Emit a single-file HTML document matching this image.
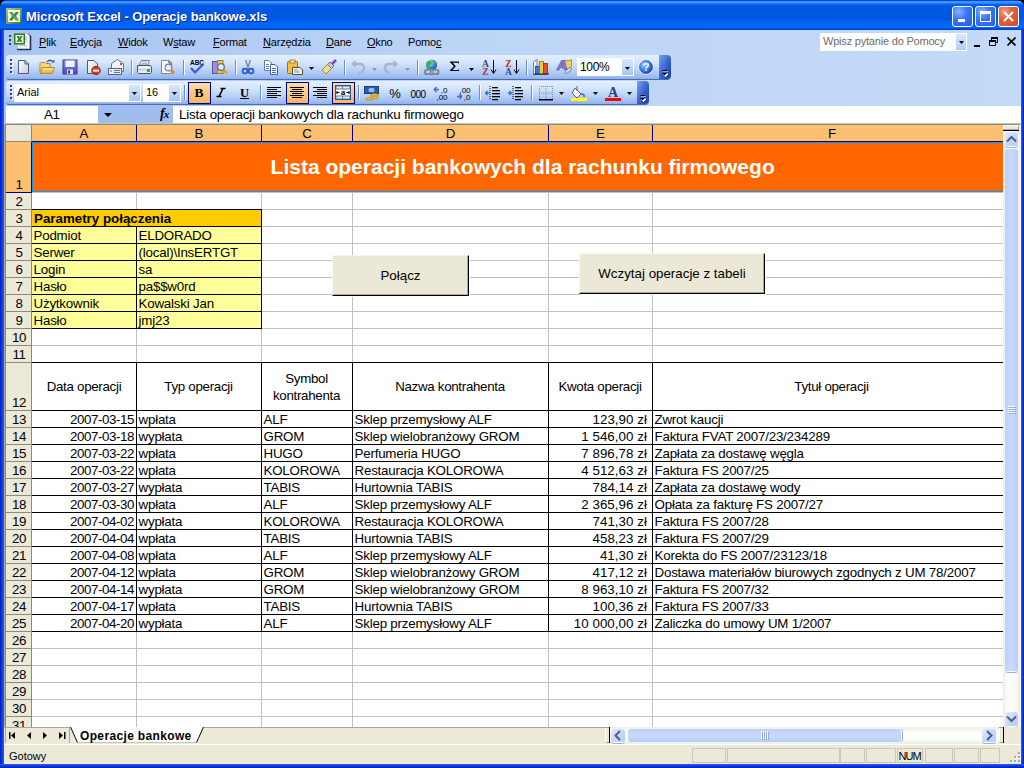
<!DOCTYPE html>
<html><head><meta charset="utf-8"><title>Excel</title><style>
*{margin:0;padding:0;box-sizing:border-box}
html,body{width:1024px;height:768px;overflow:hidden;background:#000}
body{position:relative;font-family:"Liberation Sans",sans-serif;}
div{position:absolute}
.t{white-space:nowrap;line-height:1}
</style></head>
<body>
<div style="left:0px;top:0px;width:1024px;height:30px;background:linear-gradient(to bottom,#0843d0 0px,#0843d0 1px,#3c94ff 1px,#3c94ff 3px,#0a68f2 4px,#0058e2 6px,#0058e2 19px,#0064f6 22px,#0068fc 28px,#0040c8 29px,#0040c8 30px);border-radius:7px 7px 0 0"></div><div style="left:0px;top:30px;width:4px;height:738px;background:linear-gradient(to right,#0018c8,#0a3ee0 50%,#1e64f2)"></div><div style="left:1021px;top:30px;width:3px;height:738px;background:linear-gradient(to left,#0018a8,#0a3ee0 50%,#1e64f2)"></div><div style="left:0px;top:764px;width:1024px;height:4px;background:linear-gradient(to top,#0018a8,#0a3ee0 50%,#1e64f2)"></div><svg style="position:absolute;left:6px;top:8px" width="16" height="16" viewBox="0 0 16 16">
<defs><linearGradient id="gxl" x1="0" y1="0" x2="1" y2="1"><stop offset="0" stop-color="#b4cc80"/><stop offset="1" stop-color="#4a6a1e"/></linearGradient></defs>
<rect x="0" y="0" width="16" height="16" fill="url(#gxl)"/>
<rect x="2" y="2" width="12" height="12" fill="#f4f8f0"/>
<path d="M3 4H6.2L8 6.3L9.8 4H13L10 8L13 12.5H9.8L8 10L6.2 12.5H3L6 8Z" fill="#2e9030"/>
<path d="M4 4.5L11.5 12" stroke="#9ad890" stroke-width="0.8"/>
</svg><div class="t" style="left:26px;top:10px;font-size:13px;font-weight:bold;color:#fff;text-shadow:1px 1px 0 #0a1e8c;letter-spacing:-0.08px">Microsoft Excel - Operacje bankowe.xls</div><div style="left:952px;top:6px;width:21px;height:21px;background:radial-gradient(circle at 30% 25%,#8cb0ff 0%,#3a78f8 40%,#2458e8 100%);border:1px solid #fff;border-radius:3px"><div style="left:5px;top:12px;width:7px;height:3px;background:#fff"></div></div><div style="left:975px;top:6px;width:21px;height:21px;background:radial-gradient(circle at 30% 25%,#8cb0ff 0%,#3a78f8 40%,#2458e8 100%);border:1px solid #fff;border-radius:3px"><div style="left:4px;top:4px;width:11px;height:11px;border:1px solid #fff;border-top-width:3px"></div></div><div style="left:998px;top:6px;width:21px;height:21px;background:radial-gradient(circle at 30% 25%,#f0a080 0%,#e06040 40%,#d04a20 100%);border:1px solid #fff;border-radius:3px"><svg style="position:absolute;left:3px;top:3px" width="13" height="13" viewBox="0 0 13 13"><path d="M2 2 L11 11 M11 2 L2 11" stroke="#fff" stroke-width="2"/></svg></div><div style="left:4px;top:30px;width:1017px;height:25px;background:linear-gradient(to right,#a8c4f2 0%,#bcd4f6 45%,#c4daf8 100%)"></div><div style="left:9px;top:35px;width:2px;height:2px;background:#27418a"></div><div style="left:9px;top:39px;width:2px;height:2px;background:#27418a"></div><div style="left:9px;top:43px;width:2px;height:2px;background:#27418a"></div><svg style="position:absolute;left:14px;top:33px" width="18" height="18" viewBox="0 0 18 18">
<path d="M3.5 0.5H14L16.5 3V16.5H3.5Z" fill="#f2f6fd" stroke="#b8c8e0"/>
<path d="M16.5 3V17M3 16.5H17" stroke="#27344e" stroke-width="1.6"/>
<path d="M14 0.5L16.5 3" stroke="#27344e"/>
<path d="M10 4.5H13M10 6.5H13M10 8.5H13M5 12.5H9M10 11V13H13" fill="none" stroke="#a8c0e0"/>
<rect x="0.75" y="1.25" width="9.5" height="9.5" fill="#fafcf6" stroke="#2a7a1a" stroke-width="1.5"/>
<path d="M2.5 3L4.8 3L5.5 4.5L6.2 3L8.5 3L6.8 6L8.5 9L6.2 9L5.5 7.5L4.8 9L2.5 9L4.2 6Z" fill="#2a8a2a"/>
</svg><div class="t" style="left:39px;top:37px;font-size:11px;color:#000;letter-spacing:-0.2px"><u>P</u>lik</div><div class="t" style="left:70px;top:37px;font-size:11px;color:#000;letter-spacing:-0.2px"><u>E</u>dycja</div><div class="t" style="left:118px;top:37px;font-size:11px;color:#000;letter-spacing:-0.2px"><u>W</u>idok</div><div class="t" style="left:163px;top:37px;font-size:11px;color:#000;letter-spacing:-0.2px">W<u>s</u>taw</div><div class="t" style="left:213px;top:37px;font-size:11px;color:#000;letter-spacing:-0.2px"><u>F</u>ormat</div><div class="t" style="left:263px;top:37px;font-size:11px;color:#000;letter-spacing:-0.2px"><u>N</u>arzędzia</div><div class="t" style="left:326px;top:37px;font-size:11px;color:#000;letter-spacing:-0.2px"><u>D</u>ane</div><div class="t" style="left:367px;top:37px;font-size:11px;color:#000;letter-spacing:-0.2px"><u>O</u>kno</div><div class="t" style="left:408px;top:37px;font-size:11px;color:#000;letter-spacing:-0.2px">Pomo<u>c</u></div><div style="left:820px;top:33px;width:147px;height:18px;background:#fff"></div><div class="t" style="left:823px;top:36px;font-size:11px;color:#6d6d6d;letter-spacing:-0.2px">Wpisz pytanie do Pomocy</div><div style="left:956px;top:34px;width:10px;height:16px;background:linear-gradient(to bottom,#d6e6fd,#b4ccf4)"></div><svg style="position:absolute;left:959px;top:41px" width="5" height="3"><path d="M0 0H5L2.5 3Z" fill="#000"/></svg><div style="left:974px;top:45px;width:6px;height:2px;background:#000"></div><svg style="position:absolute;left:989px;top:37px" width="9" height="9" viewBox="0 0 9 9"><path d="M2.5 0.5 H8.5 V5.5 H6.5 M0.5 3.5 H6.5 V8.5 H0.5 Z M2.5 0.5 V3.5" fill="none" stroke="#000"/><rect x="2" y="0" width="7" height="2" fill="#000"/><rect x="0" y="3" width="7" height="2" fill="#000"/></svg><svg style="position:absolute;left:1007px;top:37px" width="9" height="9" viewBox="0 0 9 9"><path d="M0.5 0.5 L8.5 8.5 M8.5 0.5 L0.5 8.5" stroke="#000" stroke-width="1.6"/></svg><div style="left:4px;top:55px;width:1017px;height:50px;background:linear-gradient(to right,#a8c4f2 0%,#bcd4f6 45%,#c4daf8 100%)"></div><div style="left:6px;top:55px;width:665px;height:24px;background:linear-gradient(to bottom,#e4effe 0%,#d6e6fc 30%,#bcd4f8 60%,#9fbdf0 90%,#8cafec 100%);border-radius:3px 4px 4px 3px;box-shadow:0 1px 0 #4a6cb0"></div><div style="left:659px;top:55px;width:12px;height:24px;background:linear-gradient(to bottom right,#7ca4ee,#3a66d0 50%,#1a3a9c);border-radius:0 4px 4px 0"></div><svg style="position:absolute;left:662px;top:70px" width="8" height="8"><path d="M1 1H6M1 4H6L3.5 6.5Z" fill="#fff" stroke="#fff" stroke-width="1"/><path d="M0.5 0.5H5.5" stroke="#000"/><path d="M0 3H5L2.5 5.5Z" fill="#000"/></svg><div style="left:10px;top:59px;width:2px;height:2px;background:#27418a;box-shadow:1px 1px 0 #fff"></div><div style="left:10px;top:63px;width:2px;height:2px;background:#27418a;box-shadow:1px 1px 0 #fff"></div><div style="left:10px;top:67px;width:2px;height:2px;background:#27418a;box-shadow:1px 1px 0 #fff"></div><div style="left:10px;top:71px;width:2px;height:2px;background:#27418a;box-shadow:1px 1px 0 #fff"></div><div style="left:6px;top:81px;width:643px;height:23px;background:linear-gradient(to bottom,#e4effe 0%,#d6e6fc 30%,#bcd4f8 60%,#9fbdf0 90%,#8cafec 100%);border-radius:3px 4px 4px 3px;box-shadow:0 1px 0 #4a6cb0"></div><div style="left:637px;top:81px;width:12px;height:23px;background:linear-gradient(to bottom right,#7ca4ee,#3a66d0 50%,#1a3a9c);border-radius:0 4px 4px 0"></div><svg style="position:absolute;left:640px;top:95px" width="8" height="8"><path d="M1 1H6M1 4H6L3.5 6.5Z" fill="#fff" stroke="#fff" stroke-width="1"/><path d="M0.5 0.5H5.5" stroke="#000"/><path d="M0 3H5L2.5 5.5Z" fill="#000"/></svg><div style="left:10px;top:85px;width:2px;height:2px;background:#27418a;box-shadow:1px 1px 0 #fff"></div><div style="left:10px;top:89px;width:2px;height:2px;background:#27418a;box-shadow:1px 1px 0 #fff"></div><div style="left:10px;top:93px;width:2px;height:2px;background:#27418a;box-shadow:1px 1px 0 #fff"></div><div style="left:10px;top:97px;width:2px;height:2px;background:#27418a;box-shadow:1px 1px 0 #fff"></div><svg width="0" height="0" style="position:absolute"><defs>
<linearGradient id="gpage" x1="0" y1="0" x2="1" y2="1"><stop offset="0" stop-color="#fff"/><stop offset="1" stop-color="#c8cee0"/></linearGradient>
<linearGradient id="gfold" x1="0" y1="0" x2="0" y2="1"><stop offset="0" stop-color="#ffe9a0"/><stop offset="1" stop-color="#e8a820"/></linearGradient>
<linearGradient id="gblue" x1="0" y1="0" x2="0" y2="1"><stop offset="0" stop-color="#8a90f0"/><stop offset="1" stop-color="#4848b8"/></linearGradient>
<linearGradient id="ghl" x1="0" y1="0" x2="0" y2="1"><stop offset="0" stop-color="#ffdca8"/><stop offset="1" stop-color="#f8b458"/></linearGradient>
<radialGradient id="gglobe" cx="0.35" cy="0.3" r="0.7"><stop offset="0" stop-color="#b8e0ff"/><stop offset="0.6" stop-color="#3c8ee0"/><stop offset="1" stop-color="#1a5aa8"/></radialGradient>
<radialGradient id="ghelp" cx="0.35" cy="0.3" r="0.7"><stop offset="0" stop-color="#9ed0ff"/><stop offset="0.7" stop-color="#2a70e0"/><stop offset="1" stop-color="#1848b0"/></radialGradient>
</defs></svg><svg style="position:absolute;left:15px;top:59px" width="16" height="16" viewBox="0 0 16 16"><path d="M3.5 1.5H10L13.5 5V14.5H3.5Z" fill="url(#gpage)" stroke="#4a5a78"/><path d="M10 1.5V5H13.5" fill="none" stroke="#4a5a78"/></svg><svg style="position:absolute;left:39px;top:59px" width="16" height="16" viewBox="0 0 16 16"><path d="M1 13.5V4.5L2 3.5H6L7 4.5H11V13.5Z" fill="#f8d878" stroke="#b08a30"/><path d="M1 14.5L3.5 8.5H15.5L13 14.5Z" fill="url(#gfold)" stroke="#b08a30"/><path d="M8 3Q11 -0.5 14 3" fill="none" stroke="#3a5aa0" stroke-width="1.5"/><path d="M12.5 3.5H15.5V0.5Z" fill="#3a5aa0"/></svg><svg style="position:absolute;left:62px;top:59px" width="16" height="16" viewBox="0 0 16 16"><rect x="1" y="1" width="14" height="14" fill="url(#gblue)" stroke="#3a3aa0"/><rect x="3.5" y="1.5" width="9" height="6.5" fill="#f4f6ff"/><rect x="5" y="10.5" width="6" height="4.5" fill="#e8e8f0"/><rect x="6" y="11.5" width="2" height="3" fill="#303060"/></svg><svg style="position:absolute;left:86px;top:59px" width="16" height="16" viewBox="0 0 16 16"><path d="M1.5 1.5H8L11.5 5V14.5H1.5Z" fill="url(#gpage)" stroke="#4a5a78"/><circle cx="10" cy="11.5" r="4.2" fill="#d03a1a" stroke="#a02010"/><rect x="7" y="10.6" width="6" height="2" fill="#fff"/></svg><svg style="position:absolute;left:108px;top:59px" width="16" height="16" viewBox="0 0 16 16"><path d="M3.5 4.5L9.5 0.5L15.5 4.5V12.5H3.5Z" fill="#f0f2f8" stroke="#68708a"/><rect x="12" y="4" width="2" height="2" fill="#e03a2a"/><rect x="0.5" y="9.5" width="13" height="6" fill="#e8ecf4" stroke="#5a6480"/><path d="M2 12H4M6 11.5H12M6 13.5H12" stroke="#5a78b0"/></svg><div style="left:131px;top:60px;width:1px;height:15px;background:#6a8cd0;box-shadow:1px 0 0 #fff"></div><svg style="position:absolute;left:136px;top:59px" width="16" height="16" viewBox="0 0 16 16"><path d="M5.5 1.5H13.5L11.5 6H3.5Z" fill="#f8f9fc" stroke="#6a7088" stroke-width="0.9"/><path d="M6.5 3H11M6 4.5H10.5" stroke="#8890a8" stroke-width="0.7"/><path d="M1.5 6.5H14.5L15.5 8V13.5L14.5 14.5H2.5L1.5 13.5Z" fill="#e8ecf4" stroke="#4a5470" stroke-width="1"/><path d="M2 8.5H14.5" stroke="#fff" stroke-width="1"/><path d="M2 10.5H11" stroke="#c8ccd8" stroke-width="1.5"/><rect x="11" y="10" width="3" height="3" fill="#18c018"/></svg><svg style="position:absolute;left:160px;top:59px" width="16" height="16" viewBox="0 0 16 16"><path d="M1.5 1.5H9L11.5 4V14.5H1.5Z" fill="#fcfcfe" stroke="#7a84a0"/><path d="M9 1.5V4H11.5" fill="none" stroke="#3a4460"/><circle cx="8.5" cy="8.5" r="3.4" fill="#e4ecf8" stroke="#707890" stroke-width="1.1"/><path d="M11 11L14 14" stroke="#e08a20" stroke-width="2.6"/></svg><div style="left:183px;top:60px;width:1px;height:15px;background:#6a8cd0;box-shadow:1px 0 0 #fff"></div><svg style="position:absolute;left:189px;top:59px" width="16" height="16" viewBox="0 0 16 16"><text x="8" y="6" font-family="Liberation Sans" font-size="6.5" font-weight="bold" text-anchor="middle" fill="#000">ABC</text><path d="M2 9L6 13.5L14.5 5" fill="none" stroke="#3a5ad8" stroke-width="2.2"/></svg><svg style="position:absolute;left:212px;top:59px" width="16" height="16" viewBox="0 0 16 16"><rect x="0.5" y="2.5" width="5" height="12" fill="#a090e0" stroke="#6050a8"/><rect x="5.5" y="1.5" width="5.5" height="13" fill="#f0c840" stroke="#a08020"/><circle cx="9" cy="8" r="3.3" fill="#e0ecf8" stroke="#5a6a88" stroke-width="1.2"/><path d="M11.5 10.5L15 14.5" stroke="#e0a030" stroke-width="2.5"/></svg><div style="left:235px;top:60px;width:1px;height:15px;background:#6a8cd0;box-shadow:1px 0 0 #fff"></div><svg style="position:absolute;left:240px;top:59px" width="16" height="16" viewBox="0 0 16 16"><path d="M5.5 1L8.5 9.5M10.5 1L7.5 9.5" stroke="#8890a0" stroke-width="1.6"/><circle cx="5" cy="12" r="2.4" fill="none" stroke="#2a5ad0" stroke-width="1.8"/><circle cx="11" cy="12" r="2.4" fill="none" stroke="#2a5ad0" stroke-width="1.8"/></svg><svg style="position:absolute;left:263px;top:59px" width="16" height="16" viewBox="0 0 16 16"><path d="M1.5 1.5H6L8.5 4V11.5H1.5Z" fill="#fafcff" stroke="#6a7a98"/><path d="M3 5.5H6M3 7.5H6M3 9.5H6" stroke="#5a8ad8"/><path d="M7.5 5.5H12L14.5 8V15.5H7.5Z" fill="#fafcff" stroke="#3a62b0"/><path d="M9 9.5H13M9 11.5H13M9 13.5H13" stroke="#3a6ac8"/></svg><svg style="position:absolute;left:287px;top:59px" width="16" height="16" viewBox="0 0 16 16"><rect x="0.5" y="2.5" width="10" height="12" rx="1" fill="#f4c040" stroke="#9a7020"/><rect x="3" y="1" width="5" height="3" fill="#f8e8b0" stroke="#9a7020" stroke-width="0.8"/><path d="M5.5 8.5H13L15.5 11V15.5H5.5Z" fill="#f0f2f8" stroke="#5a4a38"/><path d="M7 11H11M7 13H13" stroke="#8890a8"/></svg><svg style="position:absolute;left:309px;top:67px" width="5" height="3" viewBox="0 0 5 3"><path d="M0 0H5L2.5 3Z" fill="#000"/></svg><svg style="position:absolute;left:321px;top:59px" width="16" height="16" viewBox="0 0 16 16"><path d="M1 11L6.5 5.5L10.5 9.5L5 15Z" fill="#f0e08a" stroke="#a08838"/><path d="M6.5 5.5L9 3L13 7L10.5 9.5Z" fill="#c8c8d0" stroke="#707080"/><path d="M11 5L15 1" stroke="#6a50c8" stroke-width="2.5"/></svg><div style="left:344px;top:60px;width:1px;height:15px;background:#6a8cd0;box-shadow:1px 0 0 #fff"></div><svg style="position:absolute;left:350px;top:59px" width="16" height="16" viewBox="0 0 16 16"><path d="M3 5H10Q14 5 14 9Q14 13 9 14" fill="none" stroke="#a8b4cc" stroke-width="2.4"/><path d="M1 5L5.5 1V9Z" fill="#a8b4cc"/></svg><svg style="position:absolute;left:372px;top:68px" width="5" height="3" viewBox="0 0 5 3"><path d="M0 0H5L2.5 3Z" fill="#8a94aa"/></svg><svg style="position:absolute;left:383px;top:59px" width="16" height="16" viewBox="0 0 16 16"><path d="M13 5H6Q2 5 2 9Q2 13 7 14" fill="none" stroke="#a8b4cc" stroke-width="2.4"/><path d="M15 5L10.5 1V9Z" fill="#a8b4cc"/></svg><svg style="position:absolute;left:405px;top:68px" width="5" height="3" viewBox="0 0 5 3"><path d="M0 0H5L2.5 3Z" fill="#8a94aa"/></svg><div style="left:417px;top:60px;width:1px;height:15px;background:#6a8cd0;box-shadow:1px 0 0 #fff"></div><svg style="position:absolute;left:424px;top:59px" width="16" height="16" viewBox="0 0 16 16"><circle cx="7.5" cy="6" r="5.6" fill="url(#gglobe)"/><path d="M3.5 2.5Q6.5 1.5 8 3.5Q7 6 5 6.5Q4.5 9 6 10.5Q3 10 2.2 7Q2.5 4 3.5 2.5Z M9.5 1.2Q12.5 2.5 12.8 5.5Q11 6 10 4.5Q9 3 9.5 1.2Z" fill="#3cae3c"/><rect x="1" y="10.8" width="7.5" height="4.2" rx="2.1" fill="none" stroke="#3a4658" stroke-width="1.6"/><rect x="7" y="10.8" width="7.5" height="4.2" rx="2.1" fill="none" stroke="#3a4658" stroke-width="1.6"/><rect x="1" y="10.8" width="7.5" height="4.2" rx="2.1" fill="none" stroke="#e8ecf4" stroke-width="0.6"/><rect x="7" y="10.8" width="7.5" height="4.2" rx="2.1" fill="none" stroke="#e8ecf4" stroke-width="0.6"/></svg><svg style="position:absolute;left:447px;top:59px" width="16" height="16" viewBox="0 0 16 16"><path d="M3 2.5H12V4.5H11.4V3.7H5.8L8.8 7.2L5.4 11H11.4V10.2H12V12H3V11.2L6.9 7.2L3 3.3Z" fill="#000"/></svg><svg style="position:absolute;left:469px;top:68px" width="5" height="3" viewBox="0 0 5 3"><path d="M0 0H5L2.5 3Z" fill="#000"/></svg><svg style="position:absolute;left:481px;top:59px" width="16" height="16" viewBox="0 0 16 16"><text x="4.5" y="7.5" font-family="Liberation Serif" font-size="9.5" font-weight="bold" text-anchor="middle" fill="#2a4aa0">A</text><text x="4.5" y="15.5" font-family="Liberation Serif" font-size="9.5" font-weight="bold" text-anchor="middle" fill="#b03030">Z</text><path d="M12.5 1V14" stroke="#000" stroke-width="1"/><path d="M10 10.5L12.5 14.5L15 10.5" fill="none" stroke="#000" stroke-width="1"/></svg><svg style="position:absolute;left:504px;top:59px" width="16" height="16" viewBox="0 0 16 16"><text x="4.5" y="7.5" font-family="Liberation Serif" font-size="9.5" font-weight="bold" text-anchor="middle" fill="#b03030">Z</text><text x="4.5" y="15.5" font-family="Liberation Serif" font-size="9.5" font-weight="bold" text-anchor="middle" fill="#2a4aa0">A</text><path d="M12.5 1V14" stroke="#000" stroke-width="1"/><path d="M10 10.5L12.5 14.5L15 10.5" fill="none" stroke="#000" stroke-width="1"/></svg><div style="left:526px;top:60px;width:1px;height:15px;background:#6a8cd0;box-shadow:1px 0 0 #fff"></div><svg style="position:absolute;left:533px;top:59px" width="16" height="16" viewBox="0 0 16 16"><path d="M0.5 15.5V3L4 0.5V13Z" fill="#f4f6fa" stroke="#5a6478" stroke-width="0.8"/><path d="M0.5 15.5H15L16 14.5H4" fill="#e8ecf4" stroke="#38445a"/><rect x="2.5" y="7.5" width="4" height="7" fill="#3a78e0" stroke="#1a3a88" stroke-width="0.8"/><rect x="6.5" y="2.5" width="4" height="12" fill="#f4cc30" stroke="#8a7018" stroke-width="0.8"/><rect x="10.5" y="4.5" width="4" height="10" fill="#e4502a" stroke="#8a2a10" stroke-width="0.8"/></svg><svg style="position:absolute;left:556px;top:59px" width="16" height="16" viewBox="0 0 16 16"><path d="M6.5 1.5H13.5L15.5 0.5V8L13.5 9.5H6.5Z" fill="#f0d060" stroke="#a08830" stroke-width="0.8"/><path d="M0.5 11L5.5 1.5H8.5L11 11H8.5L7.8 8.5H4.2L3 11Z M4.8 6.5H7.3L6.5 3.8Z" fill="#8c80e0" stroke="#5a4cb8" stroke-width="0.7" fill-rule="evenodd"/><path d="M9 12.5L13.5 8.5Q15.5 8.5 15.5 10.5L11 14.5Q9 14.5 9 12.5Z" fill="#d8dce6" stroke="#6a7088" stroke-width="0.8"/></svg><div style="left:577px;top:58px;width:57px;height:18px;background:#fff"></div><div class="t" style="left:580px;top:61px;font-size:12px;color:#000;letter-spacing:-0.3px">100%</div><div style="left:622px;top:59px;width:11px;height:16px;background:linear-gradient(to bottom,#d6e6fd,#a9c5f1)"></div><svg style="position:absolute;left:625px;top:67px" width="5" height="3" viewBox="0 0 5 3"><path d="M0 0H5L2.5 3Z" fill="#000"/></svg><svg style="position:absolute;left:638px;top:59px" width="16" height="16" viewBox="0 0 16 16"><circle cx="8" cy="8" r="7.2" fill="url(#ghelp)" stroke="#fff" stroke-width="0.8"/><circle cx="8" cy="8" r="6.4" fill="none" stroke="#1a4ab0" stroke-width="0.6"/><text x="8" y="12.2" font-family="Liberation Sans" font-size="11" font-weight="bold" text-anchor="middle" fill="#fff">?</text></svg><div style="left:14px;top:84px;width:127px;height:18px;background:#fff"></div><div class="t" style="left:17px;top:87px;font-size:11px;color:#000">Arial</div><div style="left:129px;top:85px;width:11px;height:16px;background:linear-gradient(to bottom,#d6e6fd,#a9c5f1)"></div><svg style="position:absolute;left:132px;top:92px" width="5" height="3" viewBox="0 0 5 3"><path d="M0 0H5L2.5 3Z" fill="#000"/></svg><div style="left:143px;top:84px;width:38px;height:18px;background:#fff"></div><div class="t" style="left:146px;top:87px;font-size:11px;color:#000">16</div><div style="left:169px;top:85px;width:11px;height:16px;background:linear-gradient(to bottom,#d6e6fd,#a9c5f1)"></div><svg style="position:absolute;left:172px;top:92px" width="5" height="3" viewBox="0 0 5 3"><path d="M0 0H5L2.5 3Z" fill="#000"/></svg><div style="left:184px;top:85px;width:1px;height:15px;background:#6a8cd0;box-shadow:1px 0 0 #fff"></div><div style="left:188px;top:82px;width:23px;height:22px;background:linear-gradient(to bottom,#fedda4,#f9b55e);border:1px solid #000080"></div><svg style="position:absolute;left:191px;top:85px" width="16" height="16" viewBox="0 0 16 16"><text x="8" y="12" font-family="Liberation Serif" font-size="13.5" font-weight="bold" text-anchor="middle" fill="#000">B</text></svg><svg style="position:absolute;left:213px;top:85px" width="16" height="16" viewBox="0 0 16 16"><path d="M7.5 3.5H12.5M3.5 11.5H8.5M10 3.5L6 11.5" fill="none" stroke="#000" stroke-width="1.6"/></svg><svg style="position:absolute;left:236px;top:85px" width="16" height="16" viewBox="0 0 16 16"><text x="8.5" y="12" font-family="Liberation Serif" font-size="12.5" font-weight="bold" text-anchor="middle" fill="#000">U</text><rect x="4" y="13" width="9" height="1" fill="#000"/></svg><div style="left:260px;top:85px;width:1px;height:15px;background:#6a8cd0;box-shadow:1px 0 0 #fff"></div><svg style="position:absolute;left:266px;top:85px" width="16" height="16" viewBox="0 0 16 16"><rect x="1" y="2" width="14" height="1" fill="#000"/><rect x="1" y="4" width="10" height="1" fill="#000"/><rect x="1" y="6" width="14" height="1" fill="#000"/><rect x="1" y="8" width="10" height="1" fill="#000"/><rect x="1" y="10" width="14" height="1" fill="#000"/><rect x="1" y="12" width="10" height="1" fill="#000"/></svg><div style="left:286px;top:82px;width:23px;height:22px;background:linear-gradient(to bottom,#fedda4,#f9b55e);border:1px solid #000080"></div><svg style="position:absolute;left:289px;top:85px" width="16" height="16" viewBox="0 0 16 16"><rect x="1.0" y="2" width="14" height="1" fill="#000"/><rect x="3.0" y="4" width="10" height="1" fill="#000"/><rect x="1.0" y="6" width="14" height="1" fill="#000"/><rect x="3.0" y="8" width="10" height="1" fill="#000"/><rect x="1.0" y="10" width="14" height="1" fill="#000"/><rect x="3.0" y="12" width="10" height="1" fill="#000"/></svg><svg style="position:absolute;left:312px;top:85px" width="16" height="16" viewBox="0 0 16 16"><rect x="1" y="2" width="14" height="1" fill="#000"/><rect x="5" y="4" width="10" height="1" fill="#000"/><rect x="1" y="6" width="14" height="1" fill="#000"/><rect x="5" y="8" width="10" height="1" fill="#000"/><rect x="1" y="10" width="14" height="1" fill="#000"/><rect x="5" y="12" width="10" height="1" fill="#000"/></svg><div style="left:332px;top:82px;width:23px;height:22px;background:linear-gradient(to bottom,#fedda4,#f9b55e);border:1px solid #000080"></div><svg style="position:absolute;left:335px;top:85px" width="16" height="15" viewBox="0 0 16 15"><rect x="0.5" y="0.5" width="15" height="14" fill="#5a7aa8" stroke="#34548a"/><rect x="1.5" y="1.5" width="5.5" height="2" fill="#e4ecf8"/><rect x="8" y="1.5" width="6.5" height="2" fill="#e4ecf8"/><rect x="1" y="4.5" width="14" height="6" fill="#fff"/><rect x="1.5" y="11.5" width="5.5" height="2" fill="#e4ecf8"/><rect x="8" y="11.5" width="6.5" height="2" fill="#e4ecf8"/><text x="8" y="10.2" font-family="Liberation Serif" font-size="9" font-weight="bold" text-anchor="middle" fill="#000">a</text><path d="M1.5 7.5H4.5M11.5 7.5H14.5" stroke="#000"/><path d="M2 6V9M14 6V9" stroke="#000"/></svg><div style="left:358px;top:85px;width:1px;height:15px;background:#6a8cd0;box-shadow:1px 0 0 #fff"></div><svg style="position:absolute;left:364px;top:85px" width="16" height="16" viewBox="0 0 16 16"><rect x="0.5" y="1.5" width="14" height="7" fill="#2a5ab8" stroke="#1a3a80"/><ellipse cx="7.5" cy="5" rx="3" ry="2.2" fill="#9ac0f0"/><ellipse cx="10.5" cy="10" rx="4" ry="1.5" fill="#f0c030" stroke="#a07818" stroke-width="0.6"/><ellipse cx="10.5" cy="12.5" rx="4" ry="1.5" fill="#f0c030" stroke="#a07818" stroke-width="0.6"/><ellipse cx="5" cy="14" rx="3.5" ry="1.3" fill="#f0c030" stroke="#a07818" stroke-width="0.6"/></svg><svg style="position:absolute;left:387px;top:85px" width="16" height="16" viewBox="0 0 16 16"><text x="8" y="13" font-family="Liberation Sans" font-size="13" text-anchor="middle" fill="#000">%</text></svg><svg style="position:absolute;left:410px;top:85px" width="16" height="16" viewBox="0 0 16 16"><text x="8" y="12.5" font-family="Liberation Sans" font-size="10" text-anchor="middle" fill="#000" letter-spacing="-0.5">000</text></svg><svg style="position:absolute;left:433px;top:85px" width="16" height="16" viewBox="0 0 16 16"><path d="M1 4.5H6M1 4.5L3.5 2M1 4.5L3.5 7" fill="none" stroke="#3a6ad0" stroke-width="1.3"/><text x="11" y="7.5" font-family="Liberation Sans" font-size="8" text-anchor="middle" fill="#000">,0</text><text x="9" y="15" font-family="Liberation Sans" font-size="8" text-anchor="middle" fill="#000">,00</text></svg><svg style="position:absolute;left:456px;top:85px" width="16" height="16" viewBox="0 0 16 16"><text x="9" y="7.5" font-family="Liberation Sans" font-size="8" text-anchor="middle" fill="#000">,00</text><path d="M1 11.5H6M6 11.5L3.5 9M6 11.5L3.5 14" fill="none" stroke="#3a6ad0" stroke-width="1.3"/><text x="11" y="15" font-family="Liberation Sans" font-size="8" text-anchor="middle" fill="#000">,0</text></svg><div style="left:479px;top:85px;width:1px;height:15px;background:#6a8cd0;box-shadow:1px 0 0 #fff"></div><svg style="position:absolute;left:485px;top:85px" width="16" height="16" viewBox="0 0 16 16"><rect x="7" y="2" width="6" height="1.3" fill="#000"/><rect x="7" y="5" width="8" height="1.3" fill="#000"/><rect x="7" y="8" width="8" height="1.3" fill="#000"/><rect x="7" y="11" width="8" height="1.3" fill="#000"/><rect x="7" y="14" width="6" height="1.3" fill="#000"/><path d="M5 1V15" stroke="#000" stroke-dasharray="1 1"/><path d="M4 8H0.5M2.5 6L0.5 8L2.5 10" fill="none" stroke="#3a6ad0" stroke-width="1.3"/></svg><svg style="position:absolute;left:508px;top:85px" width="16" height="16" viewBox="0 0 16 16"><rect x="7" y="2" width="6" height="1.3" fill="#000"/><rect x="7" y="5" width="8" height="1.3" fill="#000"/><rect x="7" y="8" width="8" height="1.3" fill="#000"/><rect x="7" y="11" width="8" height="1.3" fill="#000"/><rect x="7" y="14" width="6" height="1.3" fill="#000"/><path d="M5 1V15" stroke="#000" stroke-dasharray="1 1"/><path d="M0 8H3.5M1.5 6L3.5 8L1.5 10" fill="none" stroke="#3a6ad0" stroke-width="1.3"/></svg><div style="left:531px;top:85px;width:1px;height:15px;background:#6a8cd0;box-shadow:1px 0 0 #fff"></div><svg style="position:absolute;left:538px;top:85px" width="16" height="16" viewBox="0 0 16 16"><path d="M1.5 1V14M14.5 1V14M8 1V14M1 1.5H15M1 8H15" fill="none" stroke="#8890a0" stroke-dasharray="1 1"/><rect x="1" y="14" width="14" height="1.5" fill="#000"/></svg><svg style="position:absolute;left:559px;top:92px" width="5" height="3" viewBox="0 0 5 3"><path d="M0 0H5L2.5 3Z" fill="#000"/></svg><svg style="position:absolute;left:571px;top:85px" width="16" height="16" viewBox="0 0 16 16"><path d="M4 3L10 9L6 13L1 8Z" fill="#f8f8fc" stroke="#5a6480"/><path d="M10 9Q14 9 13 12" fill="none" stroke="#3a6ad0" stroke-width="1.6"/><path d="M6 1V6" stroke="#5a6480"/><rect x="0" y="13" width="16" height="3" fill="#ffff00"/></svg><svg style="position:absolute;left:593px;top:92px" width="5" height="3" viewBox="0 0 5 3"><path d="M0 0H5L2.5 3Z" fill="#000"/></svg><svg style="position:absolute;left:605px;top:85px" width="16" height="16" viewBox="0 0 16 16"><text x="8" y="12" font-family="Liberation Serif" font-size="14" font-weight="bold" text-anchor="middle" fill="#2a3a80">A</text><rect x="0" y="13" width="16" height="3" fill="#ff0000"/></svg><svg style="position:absolute;left:627px;top:92px" width="5" height="3" viewBox="0 0 5 3"><path d="M0 0H5L2.5 3Z" fill="#000"/></svg><div style="left:4px;top:105px;width:1017px;height:1px;background:linear-gradient(to right,#a8c4f2 0%,#bcd4f6 45%,#c4daf8 100%)"></div><div style="left:4px;top:106px;width:2px;height:17px;background:#a8c4f0"></div><div style="left:98px;top:105px;width:75px;height:18px;background:#a0bdf0"></div><div style="left:6px;top:106px;width:92px;height:17px;background:#fff"></div><div class="t" style="left:44px;top:108px;font-size:13.33px;color:#000;letter-spacing:-0.3px">A1</div><svg style="position:absolute;left:104px;top:113px" width="8" height="4"><path d="M0 0H8L4 4Z" fill="#000"/></svg><div class="t" style="left:160px;top:107px;font-family:'Liberation Serif',serif;font-size:14px;font-weight:bold;color:#000"><i>f</i><i style='font-size:11px;margin-left:-1px'>x</i></div><div style="left:173px;top:106px;width:848px;height:17px;background:#fff"></div><div class="t" style="left:179px;top:108px;font-size:13.33px;color:#000;letter-spacing:-0.2px">Lista operacji bankowych dla rachunku firmowego</div><div style="left:4px;top:123px;width:1017px;height:1px;background:#c8c4b4"></div><div style="left:4px;top:124px;width:1017px;height:603px;background:#fff"></div><div style="left:136px;top:142px;width:1px;height:585px;background:#c0c0c0"></div><div style="left:261px;top:142px;width:1px;height:585px;background:#c0c0c0"></div><div style="left:352px;top:142px;width:1px;height:585px;background:#c0c0c0"></div><div style="left:548px;top:142px;width:1px;height:585px;background:#c0c0c0"></div><div style="left:652px;top:142px;width:1px;height:585px;background:#c0c0c0"></div><div style="left:32px;top:192px;width:971px;height:1px;background:#c0c0c0"></div><div style="left:32px;top:209px;width:971px;height:1px;background:#c0c0c0"></div><div style="left:32px;top:226px;width:971px;height:1px;background:#c0c0c0"></div><div style="left:32px;top:243px;width:971px;height:1px;background:#c0c0c0"></div><div style="left:32px;top:260px;width:971px;height:1px;background:#c0c0c0"></div><div style="left:32px;top:277px;width:971px;height:1px;background:#c0c0c0"></div><div style="left:32px;top:294px;width:971px;height:1px;background:#c0c0c0"></div><div style="left:32px;top:311px;width:971px;height:1px;background:#c0c0c0"></div><div style="left:32px;top:328px;width:971px;height:1px;background:#c0c0c0"></div><div style="left:32px;top:345px;width:971px;height:1px;background:#c0c0c0"></div><div style="left:32px;top:362px;width:971px;height:1px;background:#c0c0c0"></div><div style="left:32px;top:410px;width:971px;height:1px;background:#c0c0c0"></div><div style="left:32px;top:427px;width:971px;height:1px;background:#c0c0c0"></div><div style="left:32px;top:444px;width:971px;height:1px;background:#c0c0c0"></div><div style="left:32px;top:461px;width:971px;height:1px;background:#c0c0c0"></div><div style="left:32px;top:478px;width:971px;height:1px;background:#c0c0c0"></div><div style="left:32px;top:495px;width:971px;height:1px;background:#c0c0c0"></div><div style="left:32px;top:512px;width:971px;height:1px;background:#c0c0c0"></div><div style="left:32px;top:529px;width:971px;height:1px;background:#c0c0c0"></div><div style="left:32px;top:546px;width:971px;height:1px;background:#c0c0c0"></div><div style="left:32px;top:563px;width:971px;height:1px;background:#c0c0c0"></div><div style="left:32px;top:580px;width:971px;height:1px;background:#c0c0c0"></div><div style="left:32px;top:597px;width:971px;height:1px;background:#c0c0c0"></div><div style="left:32px;top:614px;width:971px;height:1px;background:#c0c0c0"></div><div style="left:32px;top:631px;width:971px;height:1px;background:#c0c0c0"></div><div style="left:32px;top:648px;width:971px;height:1px;background:#c0c0c0"></div><div style="left:32px;top:665px;width:971px;height:1px;background:#c0c0c0"></div><div style="left:32px;top:682px;width:971px;height:1px;background:#c0c0c0"></div><div style="left:32px;top:699px;width:971px;height:1px;background:#c0c0c0"></div><div style="left:32px;top:716px;width:971px;height:1px;background:#c0c0c0"></div><div style="left:4px;top:124px;width:999px;height:18px;background:#fdc070"></div><div style="left:4px;top:124px;width:999px;height:1px;background:#8c8a7a"></div><div style="left:4px;top:124px;width:1px;height:603px;background:#aca899"></div><div style="left:5px;top:124px;width:1px;height:603px;background:#8c8a7a"></div><div style="left:6px;top:125px;width:25px;height:16px;background:#ece9d8"></div><div style="left:31px;top:125px;width:1px;height:17px;background:#8c8a7a"></div><div style="left:5px;top:141px;width:27px;height:1px;background:#8c8a7a"></div><div style="left:136px;top:125px;width:1px;height:17px;background:#000080"></div><div class="t" style="left:32px;top:127px;width:104px;text-align:center;font-size:13.33px">A</div><div style="left:261px;top:125px;width:1px;height:17px;background:#000080"></div><div class="t" style="left:137px;top:127px;width:124px;text-align:center;font-size:13.33px">B</div><div style="left:352px;top:125px;width:1px;height:17px;background:#000080"></div><div class="t" style="left:262px;top:127px;width:90px;text-align:center;font-size:13.33px">C</div><div style="left:548px;top:125px;width:1px;height:17px;background:#000080"></div><div class="t" style="left:353px;top:127px;width:195px;text-align:center;font-size:13.33px">D</div><div style="left:652px;top:125px;width:1px;height:17px;background:#000080"></div><div class="t" style="left:549px;top:127px;width:103px;text-align:center;font-size:13.33px">E</div><div class="t" style="left:653px;top:127px;width:358px;text-align:center;font-size:13.33px">F</div><div style="left:32px;top:141px;width:971px;height:1px;background:#000080"></div><div style="left:6px;top:142px;width:25px;height:585px;background:#ece9d8"></div><div style="left:31px;top:142px;width:1px;height:585px;background:#8c8a7a"></div><div style="left:6px;top:142px;width:25px;height:50px;background:#fdc070"></div><div style="left:31px;top:142px;width:1px;height:51px;background:#000080"></div><div style="left:6px;top:192px;width:26px;height:1px;background:#000080"></div><div class="t" style="left:6.5px;top:178px;width:25px;text-align:center;font-size:13.33px;letter-spacing:-0.5px">1</div><div style="left:5px;top:209px;width:27px;height:1px;background:#8c8a7a"></div><div class="t" style="left:6.5px;top:195px;width:25px;text-align:center;font-size:13.33px;letter-spacing:-0.5px">2</div><div style="left:5px;top:226px;width:27px;height:1px;background:#8c8a7a"></div><div class="t" style="left:6.5px;top:212px;width:25px;text-align:center;font-size:13.33px;letter-spacing:-0.5px">3</div><div style="left:5px;top:243px;width:27px;height:1px;background:#8c8a7a"></div><div class="t" style="left:6.5px;top:229px;width:25px;text-align:center;font-size:13.33px;letter-spacing:-0.5px">4</div><div style="left:5px;top:260px;width:27px;height:1px;background:#8c8a7a"></div><div class="t" style="left:6.5px;top:246px;width:25px;text-align:center;font-size:13.33px;letter-spacing:-0.5px">5</div><div style="left:5px;top:277px;width:27px;height:1px;background:#8c8a7a"></div><div class="t" style="left:6.5px;top:263px;width:25px;text-align:center;font-size:13.33px;letter-spacing:-0.5px">6</div><div style="left:5px;top:294px;width:27px;height:1px;background:#8c8a7a"></div><div class="t" style="left:6.5px;top:280px;width:25px;text-align:center;font-size:13.33px;letter-spacing:-0.5px">7</div><div style="left:5px;top:311px;width:27px;height:1px;background:#8c8a7a"></div><div class="t" style="left:6.5px;top:297px;width:25px;text-align:center;font-size:13.33px;letter-spacing:-0.5px">8</div><div style="left:5px;top:328px;width:27px;height:1px;background:#8c8a7a"></div><div class="t" style="left:6.5px;top:314px;width:25px;text-align:center;font-size:13.33px;letter-spacing:-0.5px">9</div><div style="left:5px;top:345px;width:27px;height:1px;background:#8c8a7a"></div><div class="t" style="left:6.5px;top:331px;width:25px;text-align:center;font-size:13.33px;letter-spacing:-0.5px">10</div><div style="left:5px;top:362px;width:27px;height:1px;background:#8c8a7a"></div><div class="t" style="left:6.5px;top:348px;width:25px;text-align:center;font-size:13.33px;letter-spacing:-0.5px">11</div><div style="left:5px;top:410px;width:27px;height:1px;background:#8c8a7a"></div><div class="t" style="left:6.5px;top:396px;width:25px;text-align:center;font-size:13.33px;letter-spacing:-0.5px">12</div><div style="left:5px;top:427px;width:27px;height:1px;background:#8c8a7a"></div><div class="t" style="left:6.5px;top:413px;width:25px;text-align:center;font-size:13.33px;letter-spacing:-0.5px">13</div><div style="left:5px;top:444px;width:27px;height:1px;background:#8c8a7a"></div><div class="t" style="left:6.5px;top:430px;width:25px;text-align:center;font-size:13.33px;letter-spacing:-0.5px">14</div><div style="left:5px;top:461px;width:27px;height:1px;background:#8c8a7a"></div><div class="t" style="left:6.5px;top:447px;width:25px;text-align:center;font-size:13.33px;letter-spacing:-0.5px">15</div><div style="left:5px;top:478px;width:27px;height:1px;background:#8c8a7a"></div><div class="t" style="left:6.5px;top:464px;width:25px;text-align:center;font-size:13.33px;letter-spacing:-0.5px">16</div><div style="left:5px;top:495px;width:27px;height:1px;background:#8c8a7a"></div><div class="t" style="left:6.5px;top:481px;width:25px;text-align:center;font-size:13.33px;letter-spacing:-0.5px">17</div><div style="left:5px;top:512px;width:27px;height:1px;background:#8c8a7a"></div><div class="t" style="left:6.5px;top:498px;width:25px;text-align:center;font-size:13.33px;letter-spacing:-0.5px">18</div><div style="left:5px;top:529px;width:27px;height:1px;background:#8c8a7a"></div><div class="t" style="left:6.5px;top:515px;width:25px;text-align:center;font-size:13.33px;letter-spacing:-0.5px">19</div><div style="left:5px;top:546px;width:27px;height:1px;background:#8c8a7a"></div><div class="t" style="left:6.5px;top:532px;width:25px;text-align:center;font-size:13.33px;letter-spacing:-0.5px">20</div><div style="left:5px;top:563px;width:27px;height:1px;background:#8c8a7a"></div><div class="t" style="left:6.5px;top:549px;width:25px;text-align:center;font-size:13.33px;letter-spacing:-0.5px">21</div><div style="left:5px;top:580px;width:27px;height:1px;background:#8c8a7a"></div><div class="t" style="left:6.5px;top:566px;width:25px;text-align:center;font-size:13.33px;letter-spacing:-0.5px">22</div><div style="left:5px;top:597px;width:27px;height:1px;background:#8c8a7a"></div><div class="t" style="left:6.5px;top:583px;width:25px;text-align:center;font-size:13.33px;letter-spacing:-0.5px">23</div><div style="left:5px;top:614px;width:27px;height:1px;background:#8c8a7a"></div><div class="t" style="left:6.5px;top:600px;width:25px;text-align:center;font-size:13.33px;letter-spacing:-0.5px">24</div><div style="left:5px;top:631px;width:27px;height:1px;background:#8c8a7a"></div><div class="t" style="left:6.5px;top:617px;width:25px;text-align:center;font-size:13.33px;letter-spacing:-0.5px">25</div><div style="left:5px;top:648px;width:27px;height:1px;background:#8c8a7a"></div><div class="t" style="left:6.5px;top:634px;width:25px;text-align:center;font-size:13.33px;letter-spacing:-0.5px">26</div><div style="left:5px;top:665px;width:27px;height:1px;background:#8c8a7a"></div><div class="t" style="left:6.5px;top:651px;width:25px;text-align:center;font-size:13.33px;letter-spacing:-0.5px">27</div><div style="left:5px;top:682px;width:27px;height:1px;background:#8c8a7a"></div><div class="t" style="left:6.5px;top:668px;width:25px;text-align:center;font-size:13.33px;letter-spacing:-0.5px">28</div><div style="left:5px;top:699px;width:27px;height:1px;background:#8c8a7a"></div><div class="t" style="left:6.5px;top:685px;width:25px;text-align:center;font-size:13.33px;letter-spacing:-0.5px">29</div><div style="left:5px;top:716px;width:27px;height:1px;background:#8c8a7a"></div><div class="t" style="left:6.5px;top:702px;width:25px;text-align:center;font-size:13.33px;letter-spacing:-0.5px">30</div><div style="left:5px;top:733px;width:27px;height:1px;background:#8c8a7a"></div><div class="t" style="left:6.5px;top:719px;width:25px;text-align:center;font-size:13.33px;letter-spacing:-0.5px">31</div><div style="left:32px;top:142px;width:971px;height:50px;background:#ff6600"></div><div style="left:32px;top:142px;width:971px;height:1px;background:#0099ff"></div><div style="left:32px;top:142px;width:1px;height:50px;background:#0099ff"></div><div style="left:32px;top:191px;width:971px;height:1px;background:#0099ff"></div><div class="t" style="left:270.6px;top:156px;font-size:21px;font-weight:bold;color:#fff">Lista operacji bankowych dla rachunku firmowego</div><div style="left:32px;top:209px;width:230px;height:18px;background:#ffcc00;border:1px solid #000;border-left:none"></div><div class="t" style="left:34px;top:212px;font-size:13.33px;letter-spacing:-0.2px;font-weight:bold;letter-spacing:0">Parametry połączenia</div><div style="left:32px;top:226px;width:105px;height:18px;background:#ffff99;border:1px solid #000;border-left:none"></div><div style="left:136px;top:226px;width:126px;height:18px;background:#ffff99;border:1px solid #000"></div><div class="t" style="left:33.5px;top:229px;font-size:13.33px;letter-spacing:-0.2px;">Podmiot</div><div class="t" style="left:138.5px;top:229px;font-size:13.33px;letter-spacing:-0.2px;">ELDORADO</div><div style="left:32px;top:243px;width:105px;height:18px;background:#ffff99;border:1px solid #000;border-left:none"></div><div style="left:136px;top:243px;width:126px;height:18px;background:#ffff99;border:1px solid #000"></div><div class="t" style="left:33.5px;top:246px;font-size:13.33px;letter-spacing:-0.2px;">Serwer</div><div class="t" style="left:138.5px;top:246px;font-size:13.33px;letter-spacing:-0.2px;">(local)\InsERTGT</div><div style="left:32px;top:260px;width:105px;height:18px;background:#ffff99;border:1px solid #000;border-left:none"></div><div style="left:136px;top:260px;width:126px;height:18px;background:#ffff99;border:1px solid #000"></div><div class="t" style="left:33.5px;top:263px;font-size:13.33px;letter-spacing:-0.2px;">Login</div><div class="t" style="left:138.5px;top:263px;font-size:13.33px;letter-spacing:-0.2px;">sa</div><div style="left:32px;top:277px;width:105px;height:18px;background:#ffff99;border:1px solid #000;border-left:none"></div><div style="left:136px;top:277px;width:126px;height:18px;background:#ffff99;border:1px solid #000"></div><div class="t" style="left:33.5px;top:280px;font-size:13.33px;letter-spacing:-0.2px;">Hasło</div><div class="t" style="left:138.5px;top:280px;font-size:13.33px;letter-spacing:-0.2px;">pa$$w0rd</div><div style="left:32px;top:294px;width:105px;height:18px;background:#ffff99;border:1px solid #000;border-left:none"></div><div style="left:136px;top:294px;width:126px;height:18px;background:#ffff99;border:1px solid #000"></div><div class="t" style="left:33.5px;top:297px;font-size:13.33px;letter-spacing:-0.2px;">Użytkownik</div><div class="t" style="left:138.5px;top:297px;font-size:13.33px;letter-spacing:-0.2px;">Kowalski Jan</div><div style="left:32px;top:311px;width:105px;height:18px;background:#ffff99;border:1px solid #000;border-left:none"></div><div style="left:136px;top:311px;width:126px;height:18px;background:#ffff99;border:1px solid #000"></div><div class="t" style="left:33.5px;top:314px;font-size:13.33px;letter-spacing:-0.2px;">Hasło</div><div class="t" style="left:138.5px;top:314px;font-size:13.33px;letter-spacing:-0.2px;">jmj23</div><div style="left:332px;top:255px;width:137px;height:41px;background:#ebe8d8;border-top:1px solid #f8f6ee;border-left:1px solid #f8f6ee;border-right:1px solid #000;border-bottom:1px solid #000;box-shadow:inset -1px -1px 0 #aca899,1px 1px 0 #fff"></div><div class="t" style="left:332px;top:268.5px;width:137px;text-align:center;font-size:13.33px">Połącz</div><div style="left:579px;top:253px;width:186px;height:41px;background:#ebe8d8;border-top:1px solid #f8f6ee;border-left:1px solid #f8f6ee;border-right:1px solid #000;border-bottom:1px solid #000;box-shadow:inset -1px -1px 0 #aca899,1px 1px 0 #fff"></div><div class="t" style="left:579px;top:266.5px;width:186px;text-align:center;font-size:13.33px">Wczytaj operacje z tabeli</div><div style="left:32px;top:362px;width:971px;height:49px;background:#fff"></div><div class="t" style="left:32px;top:380px;width:104px;text-align:center;font-size:13.33px;letter-spacing:-0.3px">Data operacji</div><div class="t" style="left:136px;top:380px;width:125px;text-align:center;font-size:13.33px;letter-spacing:-0.3px">Typ operacji</div><div class="t" style="left:261px;top:370px;width:91px;text-align:center;font-size:13.33px;line-height:17px;letter-spacing:-0.3px">Symbol<br>kontrahenta</div><div class="t" style="left:352px;top:380px;width:196px;text-align:center;font-size:13.33px;letter-spacing:-0.3px">Nazwa kontrahenta</div><div class="t" style="left:548px;top:380px;width:104px;text-align:center;font-size:13.33px;letter-spacing:-0.3px">Kwota operacji</div><div class="t" style="left:652px;top:380px;width:359px;text-align:center;font-size:13.33px;letter-spacing:-0.3px">Tytuł operacji</div><div class="t" style="left:32px;top:413px;width:102px;text-align:right;font-size:13.33px;letter-spacing:-0.43px">2007-03-15</div><div class="t" style="left:138.5px;top:413px;font-size:13.33px;letter-spacing:-0.2px;">wpłata</div><div class="t" style="left:263.5px;top:413px;font-size:13.33px;letter-spacing:-0.2px;">ALF</div><div class="t" style="left:354.5px;top:413px;font-size:13.33px;letter-spacing:-0.2px;">Sklep przemysłowy ALF</div><div class="t" style="left:548px;top:413px;width:99px;text-align:right;font-size:13.33px;letter-spacing:0.05px">123,90 zł</div><div class="t" style="left:654.5px;top:413px;font-size:13.33px;letter-spacing:-0.2px;">Zwrot kaucji</div><div class="t" style="left:32px;top:430px;width:102px;text-align:right;font-size:13.33px;letter-spacing:-0.43px">2007-03-18</div><div class="t" style="left:138.5px;top:430px;font-size:13.33px;letter-spacing:-0.2px;">wypłata</div><div class="t" style="left:263.5px;top:430px;font-size:13.33px;letter-spacing:-0.2px;">GROM</div><div class="t" style="left:354.5px;top:430px;font-size:13.33px;letter-spacing:-0.2px;">Sklep wielobranżowy GROM</div><div class="t" style="left:548px;top:430px;width:99px;text-align:right;font-size:13.33px;letter-spacing:0.05px">1 546,00 zł</div><div class="t" style="left:654.5px;top:430px;font-size:13.33px;letter-spacing:-0.2px;">Faktura FVAT 2007/23/234289</div><div class="t" style="left:32px;top:447px;width:102px;text-align:right;font-size:13.33px;letter-spacing:-0.43px">2007-03-22</div><div class="t" style="left:138.5px;top:447px;font-size:13.33px;letter-spacing:-0.2px;">wpłata</div><div class="t" style="left:263.5px;top:447px;font-size:13.33px;letter-spacing:-0.2px;">HUGO</div><div class="t" style="left:354.5px;top:447px;font-size:13.33px;letter-spacing:-0.2px;">Perfumeria HUGO</div><div class="t" style="left:548px;top:447px;width:99px;text-align:right;font-size:13.33px;letter-spacing:0.05px">7 896,78 zł</div><div class="t" style="left:654.5px;top:447px;font-size:13.33px;letter-spacing:-0.2px;">Zapłata za dostawę węgla</div><div class="t" style="left:32px;top:464px;width:102px;text-align:right;font-size:13.33px;letter-spacing:-0.43px">2007-03-22</div><div class="t" style="left:138.5px;top:464px;font-size:13.33px;letter-spacing:-0.2px;">wpłata</div><div class="t" style="left:263.5px;top:464px;font-size:13.33px;letter-spacing:-0.2px;">KOLOROWA</div><div class="t" style="left:354.5px;top:464px;font-size:13.33px;letter-spacing:-0.2px;">Restauracja KOLOROWA</div><div class="t" style="left:548px;top:464px;width:99px;text-align:right;font-size:13.33px;letter-spacing:0.05px">4 512,63 zł</div><div class="t" style="left:654.5px;top:464px;font-size:13.33px;letter-spacing:-0.2px;">Faktura FS 2007/25</div><div class="t" style="left:32px;top:481px;width:102px;text-align:right;font-size:13.33px;letter-spacing:-0.43px">2007-03-27</div><div class="t" style="left:138.5px;top:481px;font-size:13.33px;letter-spacing:-0.2px;">wypłata</div><div class="t" style="left:263.5px;top:481px;font-size:13.33px;letter-spacing:-0.2px;">TABIS</div><div class="t" style="left:354.5px;top:481px;font-size:13.33px;letter-spacing:-0.2px;">Hurtownia TABIS</div><div class="t" style="left:548px;top:481px;width:99px;text-align:right;font-size:13.33px;letter-spacing:0.05px">784,14 zł</div><div class="t" style="left:654.5px;top:481px;font-size:13.33px;letter-spacing:-0.2px;">Zapłata za dostawę wody</div><div class="t" style="left:32px;top:498px;width:102px;text-align:right;font-size:13.33px;letter-spacing:-0.43px">2007-03-30</div><div class="t" style="left:138.5px;top:498px;font-size:13.33px;letter-spacing:-0.2px;">wpłata</div><div class="t" style="left:263.5px;top:498px;font-size:13.33px;letter-spacing:-0.2px;">ALF</div><div class="t" style="left:354.5px;top:498px;font-size:13.33px;letter-spacing:-0.2px;">Sklep przemysłowy ALF</div><div class="t" style="left:548px;top:498px;width:99px;text-align:right;font-size:13.33px;letter-spacing:0.05px">2 365,96 zł</div><div class="t" style="left:654.5px;top:498px;font-size:13.33px;letter-spacing:-0.2px;">Opłata za fakturę FS 2007/27</div><div class="t" style="left:32px;top:515px;width:102px;text-align:right;font-size:13.33px;letter-spacing:-0.43px">2007-04-02</div><div class="t" style="left:138.5px;top:515px;font-size:13.33px;letter-spacing:-0.2px;">wypłata</div><div class="t" style="left:263.5px;top:515px;font-size:13.33px;letter-spacing:-0.2px;">KOLOROWA</div><div class="t" style="left:354.5px;top:515px;font-size:13.33px;letter-spacing:-0.2px;">Restauracja KOLOROWA</div><div class="t" style="left:548px;top:515px;width:99px;text-align:right;font-size:13.33px;letter-spacing:0.05px">741,30 zł</div><div class="t" style="left:654.5px;top:515px;font-size:13.33px;letter-spacing:-0.2px;">Faktura FS 2007/28</div><div class="t" style="left:32px;top:532px;width:102px;text-align:right;font-size:13.33px;letter-spacing:-0.43px">2007-04-04</div><div class="t" style="left:138.5px;top:532px;font-size:13.33px;letter-spacing:-0.2px;">wpłata</div><div class="t" style="left:263.5px;top:532px;font-size:13.33px;letter-spacing:-0.2px;">TABIS</div><div class="t" style="left:354.5px;top:532px;font-size:13.33px;letter-spacing:-0.2px;">Hurtownia TABIS</div><div class="t" style="left:548px;top:532px;width:99px;text-align:right;font-size:13.33px;letter-spacing:0.05px">458,23 zł</div><div class="t" style="left:654.5px;top:532px;font-size:13.33px;letter-spacing:-0.2px;">Faktura FS 2007/29</div><div class="t" style="left:32px;top:549px;width:102px;text-align:right;font-size:13.33px;letter-spacing:-0.43px">2007-04-08</div><div class="t" style="left:138.5px;top:549px;font-size:13.33px;letter-spacing:-0.2px;">wpłata</div><div class="t" style="left:263.5px;top:549px;font-size:13.33px;letter-spacing:-0.2px;">ALF</div><div class="t" style="left:354.5px;top:549px;font-size:13.33px;letter-spacing:-0.2px;">Sklep przemysłowy ALF</div><div class="t" style="left:548px;top:549px;width:99px;text-align:right;font-size:13.33px;letter-spacing:0.05px">41,30 zł</div><div class="t" style="left:654.5px;top:549px;font-size:13.33px;letter-spacing:-0.2px;">Korekta do FS 2007/23123/18</div><div class="t" style="left:32px;top:566px;width:102px;text-align:right;font-size:13.33px;letter-spacing:-0.43px">2007-04-12</div><div class="t" style="left:138.5px;top:566px;font-size:13.33px;letter-spacing:-0.2px;">wpłata</div><div class="t" style="left:263.5px;top:566px;font-size:13.33px;letter-spacing:-0.2px;">GROM</div><div class="t" style="left:354.5px;top:566px;font-size:13.33px;letter-spacing:-0.2px;">Sklep wielobranżowy GROM</div><div class="t" style="left:548px;top:566px;width:99px;text-align:right;font-size:13.33px;letter-spacing:0.05px">417,12 zł</div><div class="t" style="left:654.5px;top:566px;font-size:13.33px;letter-spacing:-0.2px;">Dostawa materiałów biurowych zgodnych z UM 78/2007</div><div class="t" style="left:32px;top:583px;width:102px;text-align:right;font-size:13.33px;letter-spacing:-0.43px">2007-04-14</div><div class="t" style="left:138.5px;top:583px;font-size:13.33px;letter-spacing:-0.2px;">wypłata</div><div class="t" style="left:263.5px;top:583px;font-size:13.33px;letter-spacing:-0.2px;">GROM</div><div class="t" style="left:354.5px;top:583px;font-size:13.33px;letter-spacing:-0.2px;">Sklep wielobranżowy GROM</div><div class="t" style="left:548px;top:583px;width:99px;text-align:right;font-size:13.33px;letter-spacing:0.05px">8 963,10 zł</div><div class="t" style="left:654.5px;top:583px;font-size:13.33px;letter-spacing:-0.2px;">Faktura FS 2007/32</div><div class="t" style="left:32px;top:600px;width:102px;text-align:right;font-size:13.33px;letter-spacing:-0.43px">2007-04-17</div><div class="t" style="left:138.5px;top:600px;font-size:13.33px;letter-spacing:-0.2px;">wpłata</div><div class="t" style="left:263.5px;top:600px;font-size:13.33px;letter-spacing:-0.2px;">TABIS</div><div class="t" style="left:354.5px;top:600px;font-size:13.33px;letter-spacing:-0.2px;">Hurtownia TABIS</div><div class="t" style="left:548px;top:600px;width:99px;text-align:right;font-size:13.33px;letter-spacing:0.05px">100,36 zł</div><div class="t" style="left:654.5px;top:600px;font-size:13.33px;letter-spacing:-0.2px;">Faktura FS 2007/33</div><div class="t" style="left:32px;top:617px;width:102px;text-align:right;font-size:13.33px;letter-spacing:-0.43px">2007-04-20</div><div class="t" style="left:138.5px;top:617px;font-size:13.33px;letter-spacing:-0.2px;">wypłata</div><div class="t" style="left:263.5px;top:617px;font-size:13.33px;letter-spacing:-0.2px;">ALF</div><div class="t" style="left:354.5px;top:617px;font-size:13.33px;letter-spacing:-0.2px;">Sklep przemysłowy ALF</div><div class="t" style="left:548px;top:617px;width:99px;text-align:right;font-size:13.33px;letter-spacing:0.05px">10 000,00 zł</div><div class="t" style="left:654.5px;top:617px;font-size:13.33px;letter-spacing:-0.2px;">Zaliczka do umowy UM 1/2007</div><div style="left:32px;top:362px;width:971px;height:1px;background:#000"></div><div style="left:32px;top:410px;width:971px;height:1px;background:#000"></div><div style="left:32px;top:427px;width:971px;height:1px;background:#000"></div><div style="left:32px;top:444px;width:971px;height:1px;background:#000"></div><div style="left:32px;top:461px;width:971px;height:1px;background:#000"></div><div style="left:32px;top:478px;width:971px;height:1px;background:#000"></div><div style="left:32px;top:495px;width:971px;height:1px;background:#000"></div><div style="left:32px;top:512px;width:971px;height:1px;background:#000"></div><div style="left:32px;top:529px;width:971px;height:1px;background:#000"></div><div style="left:32px;top:546px;width:971px;height:1px;background:#000"></div><div style="left:32px;top:563px;width:971px;height:1px;background:#000"></div><div style="left:32px;top:580px;width:971px;height:1px;background:#000"></div><div style="left:32px;top:597px;width:971px;height:1px;background:#000"></div><div style="left:32px;top:614px;width:971px;height:1px;background:#000"></div><div style="left:32px;top:631px;width:971px;height:1px;background:#000"></div><div style="left:136px;top:362px;width:1px;height:270px;background:#000"></div><div style="left:261px;top:362px;width:1px;height:270px;background:#000"></div><div style="left:352px;top:362px;width:1px;height:270px;background:#000"></div><div style="left:548px;top:362px;width:1px;height:270px;background:#000"></div><div style="left:652px;top:362px;width:1px;height:270px;background:#000"></div><div style="left:1003px;top:125px;width:17px;height:602px;background:linear-gradient(to right,#eeede5,#fdfdfa 30%,#fdfdfa 70%,#eeede5)"></div><div style="left:1003px;top:124px;width:17px;height:1px;background:#8c8a7a"></div><div style="left:1003px;top:125px;width:16px;height:5px;background:#ece9d8;border-top:1px solid #fff;border-left:1px solid #fff;border-right:1px solid #aca899;border-bottom:1px solid #aca899"></div><div style="left:1003px;top:130px;width:16px;height:1px;background:#000"></div><div style="left:1005px;top:132px;width:13px;height:14px;background:linear-gradient(135deg,#e2eafe 0%,#c8d8fc 50%,#b4cbf8 100%);border-radius:3px;box-shadow:0 1px 0 #fff,0 2px 0 #98b2e2"></div><svg style="position:absolute;left:0;top:0;overflow:visible" width="1" height="1"><path d="M1007.0 141.5 L1011.5 137.0 L1016.0 141.5" fill="none" stroke="#4d6185" stroke-width="2"/></svg><div style="left:1005px;top:712px;width:13px;height:14px;background:linear-gradient(135deg,#e2eafe 0%,#c8d8fc 50%,#b4cbf8 100%);border-radius:3px;box-shadow:0 1px 0 #fff,0 2px 0 #98b2e2"></div><svg style="position:absolute;left:0;top:0;overflow:visible" width="1" height="1"><path d="M1007.0 716.5 L1011.5 721.0 L1016.0 716.5" fill="none" stroke="#4d6185" stroke-width="2"/></svg><div style="left:1005px;top:149px;width:13px;height:522px;background:linear-gradient(to right,#bcd0fa,#c8d8fc 40%,#c4d8fc 70%,#b4ccf8);border-radius:3px;box-shadow:0 1px 0 #fff,0 2px 0 #98b2e2"></div><div style="left:1008px;top:406px;width:7px;height:1px;background:#fff"></div><div style="left:1009px;top:407px;width:7px;height:1px;background:#8cacec"></div><div style="left:1008px;top:408px;width:7px;height:1px;background:#fff"></div><div style="left:1009px;top:409px;width:7px;height:1px;background:#8cacec"></div><div style="left:1008px;top:410px;width:7px;height:1px;background:#fff"></div><div style="left:1009px;top:411px;width:7px;height:1px;background:#8cacec"></div><div style="left:1008px;top:412px;width:7px;height:1px;background:#fff"></div><div style="left:1009px;top:413px;width:7px;height:1px;background:#8cacec"></div><div style="left:1004px;top:727px;width:17px;height:17px;background:#ece9d8"></div><div style="left:4px;top:727px;width:1000px;height:17px;background:#ece9d8"></div><div style="left:4px;top:727px;width:1000px;height:1px;background:#aca899"></div><svg style="position:absolute;left:9px;top:732px" width="60" height="8" viewBox="0 0 60 8"><rect x="0" y="0" width="1.5" height="7" fill="#000"/><path d="M6 0 V7 L2 3.5Z M22 0 V7 L18 3.5Z M34 0 V7 L38 3.5Z M50 0 V7 L54 3.5Z" fill="#000"/><rect x="55" y="0" width="1.5" height="7" fill="#000"/></svg><div style="left:69px;top:728px;width:1px;height:15px;background:#aca899"></div><div style="left:5px;top:728px;width:1px;height:15px;background:#aca899"></div><svg style="position:absolute;left:70px;top:727px" width="136" height="17" viewBox="0 0 136 17"><path d="M0 0 L7.5 15.5 L126.5 15.5 L134 0 Z" fill="#fff"/><path d="M0.5 0 L7.5 15.5 M126.5 15.5 L133.5 0" fill="none" stroke="#000"/><path d="M8 15.5 H126" stroke="#c8c6b8"/></svg><div class="t" style="left:80px;top:730px;font-size:12px;font-weight:bold;color:#000;letter-spacing:0.35px">Operacje bankowe</div><div style="left:605px;top:728px;width:4px;height:15px;background:#ece9d8;border-left:1px solid #fff;border-bottom:1px solid #aca899"></div><div style="left:609px;top:727px;width:1px;height:16px;background:#000"></div><div style="left:610px;top:727px;width:389px;height:17px;background:linear-gradient(to bottom,#eeede5,#fdfdfa 30%,#fdfdfa 70%,#eeede5)"></div><div style="left:611px;top:729px;width:14px;height:13px;background:linear-gradient(135deg,#e2eafe 0%,#c8d8fc 50%,#b4cbf8 100%);border-radius:3px;box-shadow:0 1px 0 #fff,0 2px 0 #98b2e2"></div><svg style="position:absolute;left:0;top:0;overflow:visible" width="1" height="1"><path d="M620.0 731.0 L615.5 735.5 L620.0 740.0" fill="none" stroke="#4d6185" stroke-width="2"/></svg><div style="left:982px;top:729px;width:14px;height:13px;background:linear-gradient(135deg,#e2eafe 0%,#c8d8fc 50%,#b4cbf8 100%);border-radius:3px;box-shadow:0 1px 0 #fff,0 2px 0 #98b2e2"></div><svg style="position:absolute;left:0;top:0;overflow:visible" width="1" height="1"><path d="M987.0 731.0 L991.5 735.5 L987.0 740.0" fill="none" stroke="#4d6185" stroke-width="2"/></svg><div style="left:628px;top:729px;width:273px;height:13px;background:linear-gradient(to bottom,#bcd0fa,#c8d8fc 40%,#c4d8fc 70%,#b4ccf8);border-radius:3px;box-shadow:1px 0 0 #fff,2px 0 0 #98b2e2"></div><div style="left:761px;top:731px;width:1px;height:8px;background:#fff"></div><div style="left:762px;top:732px;width:1px;height:8px;background:#8cacec"></div><div style="left:763px;top:731px;width:1px;height:8px;background:#fff"></div><div style="left:764px;top:732px;width:1px;height:8px;background:#8cacec"></div><div style="left:765px;top:731px;width:1px;height:8px;background:#fff"></div><div style="left:766px;top:732px;width:1px;height:8px;background:#8cacec"></div><div style="left:767px;top:731px;width:1px;height:8px;background:#fff"></div><div style="left:768px;top:732px;width:1px;height:8px;background:#8cacec"></div><div style="left:999px;top:728px;width:4px;height:15px;background:#ece9d8;border-left:1px solid #fff;border-bottom:1px solid #aca899"></div><div style="left:1003px;top:727px;width:1px;height:16px;background:#000"></div><div style="left:4px;top:744px;width:1017px;height:20px;background:#ece9d8"></div><div style="left:4px;top:744px;width:1017px;height:1px;background:#fff"></div><div class="t" style="left:9px;top:751px;font-size:11px;color:#000">Gotowy</div><div style="left:692px;top:748px;width:34px;height:15px;border:1px solid #c9c7ba"></div><div style="left:727px;top:748px;width:113px;height:15px;border:1px solid #c9c7ba"></div><div style="left:840px;top:748px;width:25px;height:15px;border:1px solid #c9c7ba"></div><div style="left:866px;top:748px;width:30px;height:15px;border:1px solid #c9c7ba"></div><div style="left:897px;top:748px;width:26px;height:15px;border:1px solid #c9c7ba"></div><div style="left:925px;top:748px;width:28px;height:15px;border:1px solid #c9c7ba"></div><div style="left:954px;top:748px;width:25px;height:15px;border:1px solid #c9c7ba"></div><div style="left:980px;top:748px;width:20px;height:15px;border:1px solid #c9c7ba"></div><div class="t" style="left:898.5px;top:751px;font-size:11px;color:#000;letter-spacing:-0.9px">NUM</div><div style="left:1018px;top:752px;width:2px;height:2px;background:#aca899;box-shadow:1px 1px 0 #fff"></div><div style="left:1014px;top:756px;width:2px;height:2px;background:#aca899;box-shadow:1px 1px 0 #fff"></div><div style="left:1018px;top:756px;width:2px;height:2px;background:#aca899;box-shadow:1px 1px 0 #fff"></div><div style="left:1010px;top:760px;width:2px;height:2px;background:#aca899;box-shadow:1px 1px 0 #fff"></div><div style="left:1014px;top:760px;width:2px;height:2px;background:#aca899;box-shadow:1px 1px 0 #fff"></div><div style="left:1018px;top:760px;width:2px;height:2px;background:#aca899;box-shadow:1px 1px 0 #fff"></div>
</body></html>
